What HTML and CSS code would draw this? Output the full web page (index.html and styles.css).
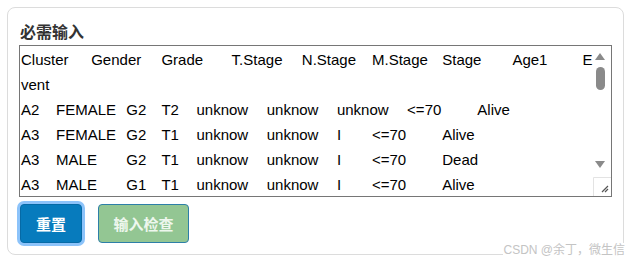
FILE: index.html
```html
<!DOCTYPE html>
<html lang="zh">
<head>
  <meta charset="UTF-8" />
  <meta name="viewport" content="width=device-width, initial-scale=1.0" />
  <title>必需输入</title>
  <link rel="stylesheet" href="styles.css">
</head>
<body>

  <!-- Required input -->
  <form class="card" id="inputForm">
    <label class="field-label" for="dataInput">必需输入</label>
    <div class="input-wrap">
      <textarea class="data-input" id="dataInput" spellcheck="false">Cluster	Gender	Grade	T.Stage	N.Stage	M.Stage	Stage	Age1	Event
A2	FEMALE	G2	T2	unknow	unknow	unknow	<=70	Alive
A3	FEMALE	G2	T1	unknow	unknow	I	<=70	Alive
A3	MALE	G2	T1	unknow	unknow	I	<=70	Dead
A3	MALE	G1	T1	unknow	unknow	I	<=70	Alive
A1	FEMALE	G2	T2	unknow	unknow	II	>70	Alive
A2	MALE	G3	T3	unknow	unknow	III	<=70	Dead
A1	FEMALE	G1	T1	unknow	unknow	I	<=70	Alive
A3	MALE	G2	T2	unknow	unknow	II	>70	Dead</textarea>

      <!-- scrollbar + resize grip -->
      <svg class="scrollbar" width="18" height="150" viewBox="0 0 18 150" aria-hidden="true">
        <polygon points="2,14 12,14 7,7" fill="#8a8a8a" />
        <rect x="3" y="21" width="9" height="23" rx="4.5" fill="#8a8a8a" />
        <polygon points="2,115 12,115 7,122" fill="#8a8a8a" />
        <path d="M0.5 150 V131.5 H18" fill="none" stroke="#e3e3e3" />
        <path d="M9 146 L15 140 M12 146 L15 143" stroke="#555" stroke-width="1.2" />
      </svg>
    </div>

    <div class="actions">
      <button type="reset" class="btn btn-primary">重置</button>
      <button type="submit" class="btn btn-check" disabled>输入检查</button>
    </div>
  </form>

  <div class="watermark">CSDN @余丁，微生信</div>

</body>
</html>
```

FILE: styles.css
```css
body {
  margin: 0;
  font-family: "Liberation Sans", "Noto Sans CJK SC", sans-serif;
  color: #212529;
  background-color: #fff;
  position: relative;
}

.card {
  margin: 7px;
  padding: 14px 11px 11px;
  border: 1px solid #dcdcdc;
  border-radius: 8px;
}

.field-label {
  display: block;
  font-size: 16px;
  font-weight: bold;
  line-height: 22px;
  color: #333;
  margin-bottom: 1px;
  padding-left: 1px;
}

.input-wrap {
  position: relative;
  width: 593px;
}

.data-input {
  display: block;
  box-sizing: border-box;
  width: 593px;
  height: 152px;
  margin: 0;
  padding: 1px 18px 0 1px;
  border: 1px solid #767676;
  border-radius: 0;
  font-family: "Liberation Sans", "Noto Sans CJK SC", sans-serif;
  font-size: 15px;
  line-height: 25px;
  color: #000;
  tab-size: 35.1px;
  word-break: break-all;
  outline: none;
  resize: none;
  overflow: hidden;
}

.scrollbar {
  position: absolute;
  top: 1px;
  right: 1px;
  display: block;
  background-color: #fff;
}

.actions {
  display: flex;
  gap: 16px;
  margin-top: 7px;
}

.btn {
  height: 39px;
  padding: 0 14px;
  border-radius: 4px;
  font-family: "Liberation Sans", "Noto Sans CJK SC", sans-serif;
  font-size: 15px;
  font-weight: bold;
  cursor: pointer;
}

.btn-primary {
  width: 62px;
  background-color: #077bbd;
  border: 1px solid #066aa6;
  color: #fff;
  box-shadow: 0 0 0 3px #8cc3fa;
  margin-left: 1px;
}

.btn-check {
  width: 91px;
  background-color: #93c693;
  border: 1px solid #2d7fa8;
  color: #eef7ee;
  cursor: default;
}

.watermark {
  position: absolute;
  right: 6px;
  bottom: 5px;
  font-size: 12px;
  color: #c4c4c4;
  background: #fff;
  line-height: 14px;
}
```
